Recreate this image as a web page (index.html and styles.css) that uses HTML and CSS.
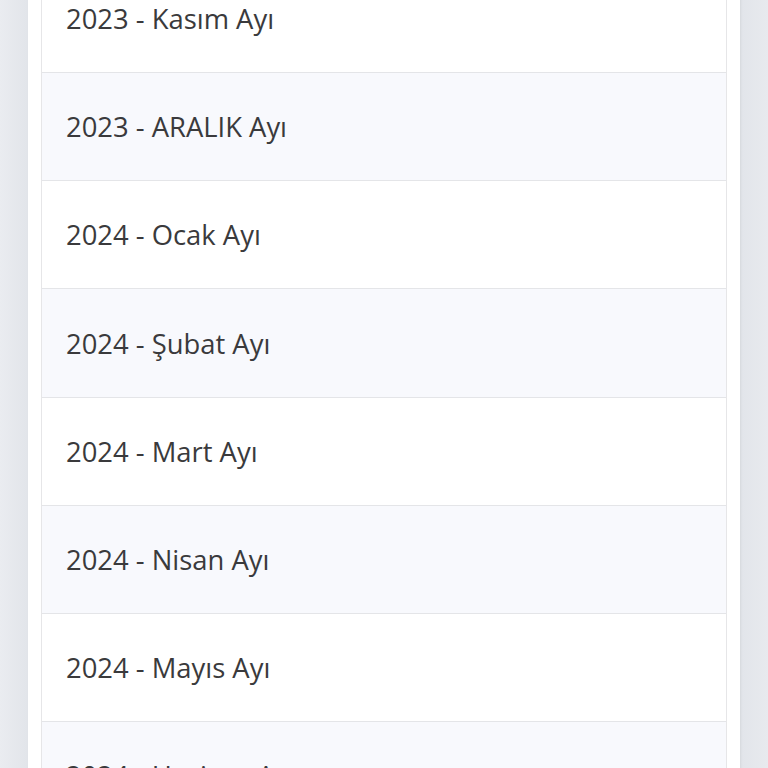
FILE: index.html
```html
<!DOCTYPE html>
<html lang="tr">
<head>
<meta charset="utf-8">
<link rel="stylesheet" href="styles.css">
</head>
<body>
<div class="page">
  <div class="panel">
    <ul class="list">
      <li class="row">2023 - Kasım Ayı</li>
      <li class="row alt">2023 - ARALIK Ayı</li>
      <li class="row">2024 - Ocak Ayı</li>
      <li class="row alt">2024 - Şubat Ayı</li>
      <li class="row">2024 - Mart Ayı</li>
      <li class="row alt">2024 - Nisan Ayı</li>
      <li class="row">2024 - Mayıs Ayı</li>
      <li class="row alt">2024 - Haziran Ayı</li>
    </ul>
  </div>
</div>
</body>
</html>
```
FILE: styles.css
```css
html, body {
  margin: 0;
  padding: 0;
  height: 768px;
  overflow: hidden;
}
body {
  background: linear-gradient(90deg, #eaecf0 0px, #e2e5ea 27px, #e2e5ea 741px, #e8eaee 768px);
  font-family: "Open Sans", "Noto Sans", sans-serif;
}
.page {
  padding: 0 28px 0 28px;
}
.panel {
  background: #ffffff;
  padding: 0 13px 0 13px;
  margin-top: -35px;
  box-shadow: 1px 0 2px rgba(0,0,0,0.06);
}
.list {
  list-style: none;
  margin: 0;
  padding: 0;
  border-left: 1px solid #e6e6e8;
  border-right: 1px solid #e6e6e8;
}
.row {
  height: 107.17px;
  border-bottom: 1px solid #e4e5e8;
  display: flex;
  align-items: center;
  padding-left: 24px;
  font-size: 27.4px;
  color: #3a3a3c;
  background: #ffffff;
}
.row.alt {
  background: #f8f9fd;
}
```
